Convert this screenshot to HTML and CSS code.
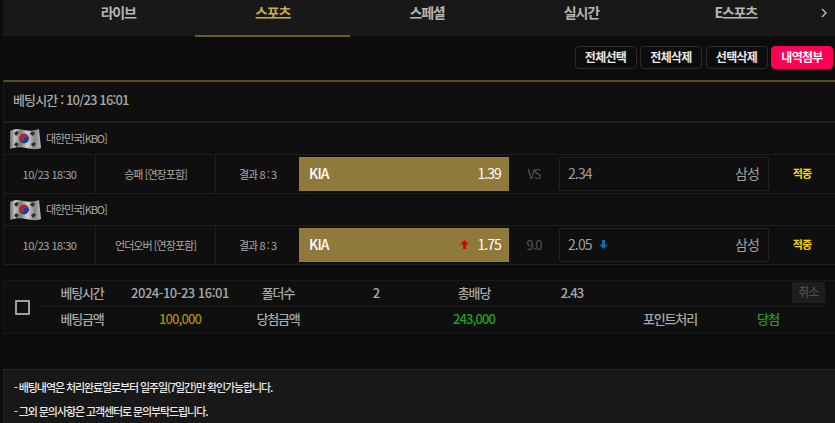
FILE: index.html
```html
<!DOCTYPE html>
<html lang="ko">
  <head>
    <meta charset="UTF-8" />
    <meta name="viewport" content="width=device-width, initial-scale=1.0" />
    <title>베팅내역</title>
    <link rel="stylesheet" href="styles.css">
  </head>
  <body>
    <svg class="defs" width="0" height="0">
      <defs>
        <linearGradient id="wave" x1="0" x2="1" y1="0" y2="0">
          <stop offset="0" stop-color="#6e6e6e" />
          <stop offset="0.16" stop-color="#c4c4c4" />
          <stop offset="0.34" stop-color="#7c7c7c" />
          <stop offset="0.56" stop-color="#d2d2d2" />
          <stop offset="0.8" stop-color="#848484" />
          <stop offset="1" stop-color="#bcbcbc" />
        </linearGradient>
        <symbol id="flag" viewBox="0 0 32 22">
          <path d="M1 3C7 0 10 1 15 2S25 3 30 1L32 20C27 22 22 21 17 20S6 19 1 21Z" fill="url(#wave)" />
          <path d="M20 10.5a5 5 0 0 0-10 0 2.5 2.5 0 0 0 5 0 2.5 2.5 0 0 1 5 0z" fill="#b8202f" />
          <path d="M10 10.5a5 5 0 0 0 10 0 2.5 2.5 0 0 0-5 0 2.5 2.5 0 0 1-5 0z" fill="#1f3f8f" />
          <path d="M5 5l3-2 2 2-3 3zM23 3l3 2-2 3-3-2zM5 17l2-3 3 2-2 3zM22 16l3-2 2 2-3 3z" fill="#2c2c2c" />
        </symbol>
      </defs>
    </svg>

    <nav class="tabs">
      <a class="tab">라이브</a>
      <a class="tab active">스포츠</a>
      <a class="tab">스페셜</a>
      <a class="tab">실시간</a>
      <a class="tab">E스포츠</a>
      <span class="tab-next">
        <svg width="8" height="10" viewBox="0 0 8 10"><path d="M2 1l4 4-4 4" fill="none" stroke="#bdbdbd" stroke-width="1.4" /></svg>
      </span>
    </nav>

    <div class="toolbar">
      <button class="btn">전체선택</button>
      <button class="btn">전체삭제</button>
      <button class="btn">선택삭제</button>
      <button class="btn btn-red">내역첨부</button>
    </div>

    <section class="history">
      <div class="bet-time">베팅시간 : 10/23 16:01</div>

      <div class="league">
        <svg class="flag"><use href="#flag" /></svg>
        <span>대한민국[KBO]</span>
      </div>
      <div class="game">
        <div class="g-date">10/23 18:30</div>
        <div class="g-type">승패 [연장포함]</div>
        <div class="g-score">결과 8 : 3</div>
        <div class="pick home selected"><b>KIA</b><span class="odds">1.39</span></div>
        <div class="g-vs">VS</div>
        <div class="pick away"><span class="odds">2.34</span><span class="team">삼성</span></div>
        <div class="g-status">적중</div>
      </div>

      <div class="league">
        <svg class="flag"><use href="#flag" /></svg>
        <span>대한민국[KBO]</span>
      </div>
      <div class="game">
        <div class="g-date">10/23 18:30</div>
        <div class="g-type">언더오버 [연장포함]</div>
        <div class="g-score">결과 8 : 3</div>
        <div class="pick home selected">
          <b>KIA</b>
          <span class="odds">
            <svg class="arrow" viewBox="0 0 9 9"><path d="M4.5 0L9 4.5H6V9H3V4.5H0z" fill="#e00000" /></svg>1.75
          </span>
        </div>
        <div class="g-vs">9.0</div>
        <div class="pick away">
          <span class="odds">2.05<svg class="arrow after" viewBox="0 0 9 9"><path d="M4.5 9L9 4.5H6V0H3V4.5H0z" fill="#0a6fb5" /></svg></span>
          <span class="team">삼성</span>
        </div>
        <div class="g-status">적중</div>
      </div>
    </section>

    <section class="slip">
      <div class="slip-check"><span class="checkbox"></span></div>
      <div class="slip-rows">
        <div class="slip-row first">
          <div class="label">베팅시간</div>
          <div class="full-date">2024-10-23 16:01</div>
          <div class="label">폴더수</div>
          <div>2</div>
          <div class="label">총배당</div>
          <div>2.43</div>
          <div></div>
          <div class="slip-cancel"><button class="cancel">취소</button></div>
        </div>
        <div class="slip-row">
          <div class="label">베팅금액</div>
          <div class="amount">100,000</div>
          <div class="label">당첨금액</div>
          <div></div>
          <div class="win">243,000</div>
          <div></div>
          <div class="label">포인트처리</div>
          <div class="win">당첨</div>
        </div>
      </div>
    </section>

    <section class="notice">
      <p>- 배팅내역은 처리완료일로부터 일주일(7일간)만 확인가능합니다.</p>
      <p>- 그외 문의사항은 고객센터로 문의부탁드립니다.</p>
    </section>
  </body>
</html>
```

FILE: styles.css
```css
html,
body {
  height: 423px;
  overflow: hidden;
}
body {
  margin: 0;
  background: #0c0c0c;
  color: #a8a8a8;
  font-family: "Noto Sans CJK KR", "Noto Sans", sans-serif;
  font-size: 12px;
  letter-spacing: -0.6px;
}
.defs {
  display: block;
  height: 0;
}
.tabs {
  display: flex;
  height: 36px;
  margin-left: 3px;
  padding-left: 38px;
  background: #181818;
}
.tab {
  box-sizing: border-box;
  width: 154.4px;
  height: 37px;
  padding-bottom: 13px;
  display: flex;
  align-items: center;
  justify-content: center;
  color: #b4b4b4;
  font-size: 14px;
  font-weight: 700;
  letter-spacing: -1.2px;
}
.tab.active {
  color: #c7a850;
  border-bottom: 2px solid #6d5a2a;
  padding-bottom: 12px;
}
.tab-next {
  width: 22px;
  display: flex;
  align-items: center;
  justify-content: center;
  padding-bottom: 10px;
}
.toolbar {
  display: flex;
  justify-content: flex-end;
  gap: 3.5px;
  height: 44px;
  padding: 10px 2px 0 0;
  box-sizing: border-box;
}
.btn {
  width: 62px;
  height: 23px;
  padding: 0 0 2px;
  background: #0c0c0c;
  border: 1px solid #2c2c2c;
  border-radius: 4px;
  color: #e8e8e8;
  font: 700 12px "Noto Sans CJK KR", sans-serif;
  letter-spacing: -0.7px;
}
.btn-red {
  background: #ff0055;
  border-color: #ff0055;
  color: #fff;
}
.history {
  margin-left: 3px;
  background: #0f0f0f;
  border-left: 1px solid #1c1c1c;
  border-top: 2px solid #5c4c24;
}
.bet-time {
  height: 35px;
  padding: 0 0 4px 9px;
  display: flex;
  align-items: center;
  border-bottom: 2px solid #1e1e1e;
  font-size: 13px;
  font-weight: 500;
  letter-spacing: -0.85px;
}
.league {
  height: 31px;
  display: flex;
  align-items: center;
  gap: 5px;
  padding-left: 5px;
  border-bottom: 1px solid #1e1e1e;
  font-size: 11px;
  letter-spacing: -1.1px;
}
.league span {
  margin-bottom: 2px;
}
.flag {
  width: 32px;
  height: 22px;
}
.game {
  height: 38px;
  display: grid;
  grid-template-columns: 92px 120px 83px 210px 50px 210px 1fr;
  align-items: center;
  text-align: center;
  border-bottom: 1px solid #1e1e1e;
  font-size: 11px;
  letter-spacing: -0.95px;
}
.g-date,
.g-type,
.g-score {
  height: 100%;
  display: flex;
  align-items: center;
  justify-content: center;
  padding-bottom: 1px;
  box-sizing: border-box;
}
.g-date {
  letter-spacing: -0.5px;
}
.g-date,
.g-type {
  border-right: 1px solid #1e1e1e;
}
.g-status {
  color: #f2d500;
  font-weight: 700;
  padding-bottom: 2px;
  letter-spacing: -0.8px;
}
.g-vs {
  color: #555;
  font-size: 13px;
  padding-bottom: 2px;
}
.pick {
  box-sizing: border-box;
  height: 34px;
  display: flex;
  align-items: center;
  justify-content: space-between;
  padding: 0 8px 2px 10px;
  font-size: 14px;
  letter-spacing: -0.9px;
}
.home.selected {
  background: #8f7a3c;
  color: #fff;
}
.pick b {
  font-weight: 500;
}
.away {
  padding-left: 8px;
  padding-right: 9px;
  border: 1px solid #222;
  border-radius: 2px;
  color: #a0a0a0;
}
.odds {
  display: flex;
  align-items: center;
}
.arrow {
  width: 9px;
  height: 9px;
  margin-right: 8px;
}
.arrow.after {
  margin: 0 0 0 7px;
}
.slip {
  display: flex;
  height: 54px;
  margin: 15px 0 0 3px;
  background: #0f0f0f;
  border: 1px solid #191919;
  border-right: 0;
  box-sizing: border-box;
}
.slip-check {
  width: 37px;
  display: flex;
  align-items: center;
  justify-content: center;
}
.checkbox {
  box-sizing: border-box;
  width: 15px;
  height: 15px;
  border: 2px solid #a0a0a0;
  border-radius: 1px;
  margin-right: 1px;
}
.slip-rows {
  width: 784px;
}
.slip-row {
  box-sizing: border-box;
  display: grid;
  grid-template-columns: 90px repeat(7, 98px);
  align-items: center;
  height: 26px;
  padding-bottom: 3px;
  text-align: center;
  font-size: 13px;
  font-weight: 500;
  letter-spacing: -0.9px;
  white-space: nowrap;
}
.slip-row > :first-child {
  padding-right: 8px;
}
.slip-row.first {
  border-bottom: 1px solid #1e1e1e;
}
.label {
  letter-spacing: -1.2px;
}
.full-date {
  justify-self: center;
  letter-spacing: -0.5px;
}
.slip-cancel {
  display: flex;
  justify-content: flex-end;
  margin-right: -8px;
}
.cancel {
  width: 33px;
  height: 21px;
  padding: 0 0 2px;
  border: 0;
  background: #1e1e1e;
  color: #4e4e4e;
  font: 500 12px "Noto Sans CJK KR", sans-serif;
  letter-spacing: -0.7px;
}
.amount {
  color: #a88a10;
}
.win {
  color: #1fa31f;
}
.notice {
  margin: 35px 0 0 3px;
  height: 60px;
  padding: 9px 0 0 10px;
  box-sizing: border-box;
  background: #181818;
  border-top: 1px solid #262626;
  border-left: 1px solid #222;
  color: #e8e8e8;
  font-size: 11px;
  font-weight: 500;
  letter-spacing: -1.1px;
}
.notice p {
  margin: 0 0 8px;
  line-height: 16px;
}
```
